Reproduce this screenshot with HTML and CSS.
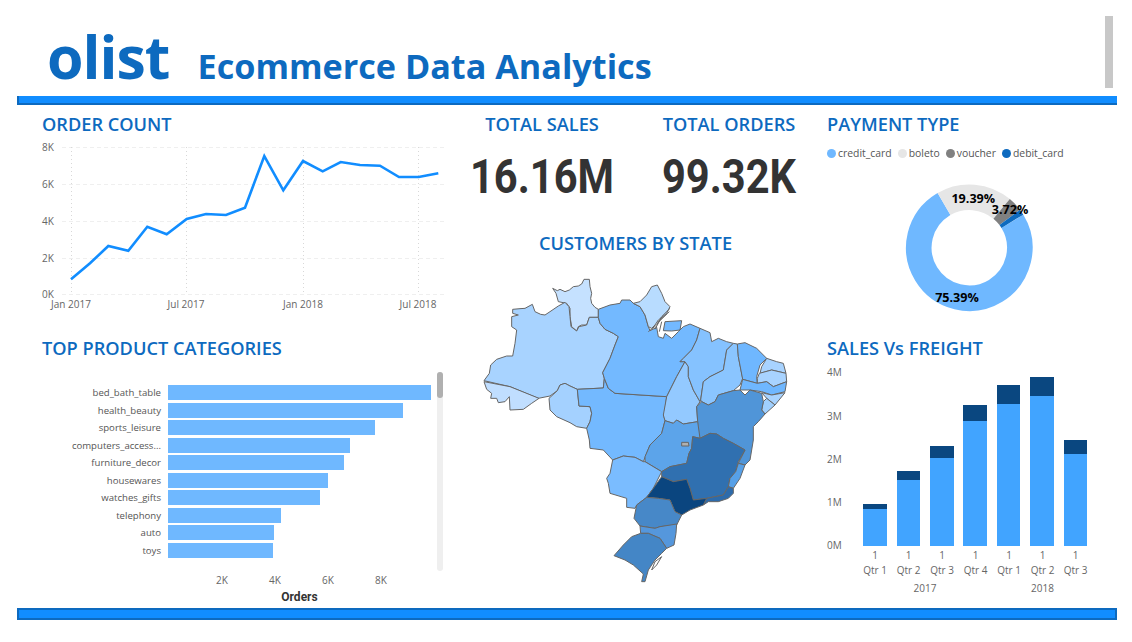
FILE: index.html
```html
<!DOCTYPE html>
<html lang="en">
<head>
<meta charset="utf-8">
<title>olist Ecommerce Data Analytics</title>
<link rel="stylesheet" href="styles.css">
</head>
<body>
<div class="page">
  <header class="header">
    <span class="logo">olist</span>
    <h1 class="title">Ecommerce Data Analytics</h1>
    <div class="page-scroll"></div>
  </header>
  <div class="rule rule-top"></div>
  <main class="dash">
    <div class="col col-left">
      <section class="panel">
        <h2>ORDER COUNT</h2>
        <svg class="chart chart-line" viewBox="17 136 435 184" width="435" height="184">
          <g class="grid-h">
            <line x1="62" x2="445" y1="147.5" y2="147.5"/><line x1="62" x2="445" y1="184.5" y2="184.5"/><line x1="62" x2="445" y1="221.5" y2="221.5"/><line x1="62" x2="445" y1="258.5" y2="258.5"/><line x1="62" x2="445" y1="294.5" y2="294.5"/>
          </g>
          <g class="grid-v">
            <line x1="71.5" x2="71.5" y1="147" y2="295"/><line x1="186.5" x2="186.5" y1="147" y2="295"/><line x1="303.5" x2="303.5" y1="147" y2="295"/><line x1="418.5" x2="418.5" y1="147" y2="295"/>
          </g>
          <g class="axis">
            <text x="42" y="151">8K</text><text x="42" y="188">6K</text><text x="42" y="225">4K</text><text x="42" y="262">2K</text><text x="42" y="298">0K</text>
          </g>
          <g class="axis mid">
            <text x="71" y="308">Jan 2017</text><text x="186" y="308">Jul 2017</text><text x="303" y="308">Jan 2018</text><text x="418" y="308">Jul 2018</text>
          </g>
          <polyline class="trend" points="71,279.3 90,263.3 108.3,246 128.3,250.7 147.3,226.7 166.7,234.3 186.7,219 206,214 226,215 245,207.7 264.3,156 283.3,190.3 303,161 322.7,171.3 340.7,162 360,165 380,165.7 399,177 418.7,177 438.3,173.3"/>
        </svg>
      </section>
      <section class="panel panel-products">
        <h2>TOP PRODUCT CATEGORIES</h2>
        <div class="bars">
          <div class="bar-row"><span class="bar-label">bed_bath_table</span><span class="bar" style="width:263px"></span></div>
          <div class="bar-row"><span class="bar-label">health_beauty</span><span class="bar" style="width:235px"></span></div>
          <div class="bar-row"><span class="bar-label">sports_leisure</span><span class="bar" style="width:207px"></span></div>
          <div class="bar-row"><span class="bar-label">computers_access...</span><span class="bar" style="width:182px"></span></div>
          <div class="bar-row"><span class="bar-label">furniture_decor</span><span class="bar" style="width:176px"></span></div>
          <div class="bar-row"><span class="bar-label">housewares</span><span class="bar" style="width:160px"></span></div>
          <div class="bar-row"><span class="bar-label">watches_gifts</span><span class="bar" style="width:152px"></span></div>
          <div class="bar-row"><span class="bar-label">telephony</span><span class="bar" style="width:113px"></span></div>
          <div class="bar-row"><span class="bar-label">auto</span><span class="bar" style="width:106px"></span></div>
          <div class="bar-row"><span class="bar-label">toys</span><span class="bar" style="width:105px"></span></div>
          <div class="scroll-track"><div class="scroll-thumb"></div></div>
          <div class="ticks"><span>2K</span><span>4K</span><span>6K</span><span>8K</span></div>
          <div class="axis-title">Orders</div>
        </div>
      </section>
    </div>

    <div class="col col-mid">
      <div class="kpis">
        <section class="kpi"><h2>TOTAL SALES</h2><div class="kpi-value">16.16M</div></section>
        <section class="kpi"><h2>TOTAL ORDERS</h2><div class="kpi-value">99.32K</div></section>
      </div>
      <section class="map-panel">
        <h2>CUSTOMERS BY STATE</h2>
        <svg class="map" viewBox="0 0 1020 960" width="340" height="320">
          <g class="states">
            <path fill="#c5e1ff" d="M248,55 262,62 270,58 285,65 298,60 310,50 325,48 335,42 342,28 358,28 360,50 365,70 362,85 365,100 375,112 385,118 385,142 358,142 350,165 335,165 325,170 320,183 305,170 300,140 300,115 290,100 265,95 258,70Z"/>
            <path fill="#a8d3ff" d="M128,118 150,116 165,115 187,103 195,125 212,133 225,135 240,125 265,108 285,97 297,110 300,140 303,170 320,183 327,170 350,165 358,142 385,142 390,160 405,178 430,190 445,200 435,225 420,265 398,308 403,325 400,354 322,358 300,348 285,340 270,345 262,362 240,378 205,385 120,350 42,332 58,310 62,285 80,268 110,258 128,258 135,220 140,180 125,170 125,140 145,135 128,130Z"/>
            <path fill="#c0deff" d="M42,335 120,350 207,385 185,400 160,418 120,420 118,380 105,395 85,398 80,385 62,385 65,370 50,358Z"/>
            <path fill="#a4d1ff" d="M262,362 270,345 285,340 300,348 322,358 327,408 360,410 365,430 360,455 350,475 320,470 300,458 260,440 240,420 237,385Z"/>
            <path fill="#73b9ff" d="M322,358 400,354 403,325 415,355 435,370 590,380 582,440 585,452 575,490 540,525 520,575 495,562 460,558 428,570 400,540 360,535 358,510 350,475 360,455 365,430 360,410 327,408Z"/>
            <path fill="#73b9ff" d="M385,118 420,105 450,100 455,90 480,90 490,100 510,110 525,135 535,170 540,182 560,172 565,200 580,205 585,190 605,205 625,185 640,170 660,162 690,175 680,210 665,240 640,265 630,275 645,275 620,320 590,380 435,370 415,355 403,325 398,308 420,265 435,225 445,200 430,190 405,178 390,160 385,142Z"/>
            <path fill="#73b9ff" d="M585,155 635,152 630,180 605,183 580,182Z"/>
            <path fill="#b8dcff" d="M490,100 510,95 530,75 545,50 562,45 575,70 585,95 600,110 590,130 565,150 555,165 545,175 535,170 525,135 510,110Z"/>
            <path fill="none" d="M600,115 575,140 560,165 535,185M598,125 570,150 555,178M575,155 568,185M590,132 562,160"/>
            <path fill="#93c9ff" d="M645,275 655,290 655,320 670,360 690,395 680,410 683,455 640,462 620,450 610,460 585,452 580,435 590,380 620,320Z"/>
            <path fill="#85c2ff" d="M690,175 720,188 725,215 745,205 770,215 790,220 770,240 765,270 760,300 720,320 700,335 692,390 690,395 670,360 655,320 655,290 645,275 630,275 640,265 665,240 680,210Z"/>
            <path fill="#8ac5ff" d="M790,220 802,222 805,260 818,325 810,345 790,362 745,375 735,395 715,405 695,395 692,390 700,335 720,320 760,300 765,270 770,240Z"/>
            <path fill="#6fb7ff" d="M802,222 825,218 860,235 890,265 870,285 860,320 862,340 818,328 805,260Z"/>
            <path fill="#a8d3ff" d="M890,265 920,275 940,280 948,310 905,300 870,310 875,290Z"/>
            <path fill="#a8d3ff" d="M862,325 868,310 905,300 948,310 950,335 910,350 890,335 862,340Z"/>
            <path fill="#6fb7ff" d="M818,328 862,340 890,335 910,350 950,335 945,365 905,375 875,365 840,360 810,360Z"/>
            <path fill="#a8d3ff" d="M875,368 905,375 945,368 915,405 890,385Z"/>
            <path fill="#a0d0ff" d="M880,395 890,385 915,405 885,432 875,420Z"/>
            <path fill="#5095d8" d="M680,410 695,395 715,405 735,395 745,375 790,362 810,360 825,375 840,360 875,370 880,395 875,420 885,432 865,455 850,470 850,510 840,570 825,585 805,580 825,540 790,520 760,505 740,492 720,490 690,505 683,480 683,455Z"/>
            <path fill="#5ca4ea" d="M585,452 610,460 620,450 640,462 683,455 690,505 668,500 665,535 657,550 650,580 600,590 575,605 525,575 525,560 540,525 575,490Z"/>
            <path fill="#b0b0b0" d="M635,517 655,517 657,528 635,528Z"/>
            <path fill="#7abcff" d="M428,570 460,558 495,562 520,575 525,575 575,605 550,655 530,682 500,705 495,715 470,712 470,685 420,670 415,640 410,625 420,610Z"/>
            <path fill="#3070b0" d="M575,605 600,590 650,580 657,550 665,535 668,500 690,505 720,490 740,492 760,505 790,520 825,540 805,575 797,605 780,625 775,650 760,675 710,685 670,690 660,655 650,628 610,635 575,620Z"/>
            <path fill="#56a0e8" d="M805,580 825,585 810,625 790,655 775,650 780,625 797,605Z"/>
            <path fill="#2d6bab" d="M775,650 790,655 790,670 775,685 745,695 715,695 700,705 710,685 760,675Z"/>
            <path fill="#0a457f" d="M575,620 610,635 650,628 660,655 670,690 710,685 700,705 660,720 635,735 615,725 600,690 565,685 530,682 550,655Z"/>
            <path fill="#4788c8" d="M530,682 565,685 600,690 615,725 635,735 620,765 570,770 555,775 510,768 492,745 500,705Z"/>
            <path fill="#5597dc" d="M510,768 555,775 570,770 620,762 618,790 612,825 590,835 570,805 535,790 512,790Z"/>
            <path fill="#4486c6" d="M512,790 535,790 570,805 590,835 575,850 555,870 535,900 525,935 515,935 520,912 490,885 465,870 432,857 460,825 485,800Z"/>
            <path fill="#ffffff" d="M575,860 560,885 545,900 555,875Z"/>
          </g>
        </svg>
      </section>
    </div>

    <div class="col col-right">
      <section class="panel">
        <h2>PAYMENT TYPE</h2>
        <ul class="legend">
          <li><i class="dot dot-credit"></i>credit_card</li>
          <li><i class="dot dot-boleto"></i>boleto</li>
          <li><i class="dot dot-voucher"></i>voucher</li>
          <li><i class="dot dot-debit"></i>debit_card</li>
        </ul>
        <svg class="chart chart-donut" viewBox="819 161 298 159" width="298" height="159">
          <g class="ring" transform="translate(969.3 247.7)">
            <circle class="seg-credit" r="50.5" pathLength="100" stroke-dasharray="75.39 100" transform="rotate(-31.4)"/>
            <circle class="seg-boleto" r="50.5" pathLength="100" stroke-dasharray="19.39 100" transform="rotate(240)"/>
            <circle class="seg-voucher" r="50.5" pathLength="100" stroke-dasharray="3.72 100" transform="rotate(-50.2)"/>
            <circle class="seg-debit" r="50.5" pathLength="100" stroke-dasharray="1.5 100" transform="rotate(-36.8)"/>
          </g>
          <g class="donut-label">
            <text x="973.3" y="203">19.39%</text>
            <text x="1010" y="214">3.72%</text>
            <text x="957" y="302">75.39%</text>
          </g>
        </svg>
      </section>
      <section class="panel panel-sales">
        <h2>SALES Vs FREIGHT</h2>
        <svg class="chart chart-sales" viewBox="819 360 298 245" width="298" height="245">
          <g class="axis">
            <text x="827" y="376">4M</text><text x="827" y="420">3M</text><text x="827" y="463">2M</text><text x="827" y="506">1M</text><text x="827" y="549">0M</text>
          </g>
          <g class="sales-light">
            <rect x="863" y="509" width="24" height="37"/><rect x="897" y="480" width="23" height="66"/><rect x="930" y="458" width="24" height="88"/><rect x="963" y="421" width="24" height="125"/><rect x="997" y="404" width="23" height="142"/><rect x="1030" y="396" width="24" height="150"/><rect x="1064" y="454" width="23" height="92"/>
          </g>
          <g class="sales-dark">
            <rect x="863" y="504" width="24" height="5"/><rect x="897" y="471" width="23" height="9"/><rect x="930" y="446" width="24" height="12"/><rect x="963" y="405" width="24" height="16"/><rect x="997" y="385" width="23" height="19"/><rect x="1030" y="377" width="24" height="19"/><rect x="1064" y="440" width="23" height="14"/>
          </g>
          <g class="axis mid">
            <text x="875" y="559">1</text><text x="908.5" y="559">1</text><text x="942" y="559">1</text><text x="975.5" y="559">1</text><text x="1009" y="559">1</text><text x="1042.5" y="559">1</text><text x="1075.5" y="559">1</text>
            <text x="875" y="574">Qtr 1</text><text x="908.5" y="574">Qtr 2</text><text x="942" y="574">Qtr 3</text><text x="975.5" y="574">Qtr 4</text><text x="1009" y="574">Qtr 1</text><text x="1042.5" y="574">Qtr 2</text><text x="1075.5" y="574">Qtr 3</text>
            <text x="925" y="592">2017</text><text x="1042.5" y="592">2018</text>
          </g>
        </svg>
      </section>
    </div>
  </main>
  <div class="rule rule-bottom"></div>
</div>
</body>
</html>
```
FILE: styles.css
```css
* { box-sizing: border-box; }
html, body { margin: 0; height: 100%; background: #fff; overflow: hidden; }
body { font-family: "Open Sans", "Noto Sans", sans-serif; color: #555; }
.page { width: 1132px; height: 642px; padding: 0 15px 0 17px; }

.header { position: relative; height: 96px; display: flex; align-items: baseline; padding: 20px 0 0 30px; color: #0d6abf; }
.logo { font-size: 59px; font-weight: 700; line-height: 72px; letter-spacing: -1px; }
.title { margin: 0 0 0 28px; font-size: 34.2px; font-weight: 700; line-height: 44px; }
.page-scroll { position: absolute; left: 1088px; top: 16px; width: 8px; height: 72px; background: #c8c8c8; }

.rule { background: #118dff; border: solid #0d6abf; }
.rule-top { height: 9px; border-width: 0 0 2px 2px; }
.rule-bottom { height: 12px; border-width: 2px; }

.dash { display: grid; grid-template-columns: 435px 367px 298px; height: 503px; }
.col { min-width: 0; }
h2 { margin: 0; font-size: 18.2px; line-height: 24px; font-weight: 600; color: #0d6abf; white-space: nowrap; }

.col-left .panel h2 { padding-left: 25px; }
.col-left .panel:first-child, .col-right .panel:first-child, .kpis { padding-top: 7px; }
.chart { display: block; }
.panel-products, .panel-sales { margin-top: 16px; }

.grid-h line { stroke: #efefef; stroke-dasharray: 4 3; }
.grid-v line { stroke: #d8d8d8; stroke-dasharray: 1 3; }
.axis text { font-size: 10px; fill: #666; }
.axis.mid text { text-anchor: middle; }
.trend { fill: none; stroke: #118dff; stroke-width: 2.6; stroke-linejoin: miter; }

.bars { position: relative; padding-top: 25px; display: grid; row-gap: 2.5px; }
.bar-row { height: 15px; display: grid; grid-template-columns: 144px auto; column-gap: 7px; justify-content: start; align-items: stretch; }
.bar-label { font-size: 9.6px; line-height: 15px; text-align: right; color: #555; white-space: nowrap; }
.bar { display: block; background: #6fb8ff; }
.scroll-track { position: absolute; left: 420px; top: 12px; width: 6px; height: 199px; border-radius: 3px; background: #efefef; }
.scroll-thumb { width: 6px; height: 26px; border-radius: 3px; background: #b0b0b0; }
.ticks { display: grid; grid-template-columns: repeat(4, 53px); margin: 13px 0 0 178.5px; font-size: 10px; line-height: 14px; text-align: center; color: #666; }
.axis-title { margin-top: -1px; width: 565px; text-align: center; font-family: Roboto, "Liberation Sans", sans-serif; font-weight: 700; font-size: 12px; line-height: 16px; color: #333; }

.kpis { display: grid; grid-template-columns: 180px 180px; column-gap: 7px; text-align: center; }
.kpi-value { margin-top: 13px; font-family: Roboto, "Liberation Sans", sans-serif; font-weight: 700; font-size: 49px; line-height: 56px; color: #333; transform: scaleX(.85); }
.map-panel { margin-top: 26px; text-align: center; }
.map { display: block; margin: 15px 0 0 18px; }
.states path { stroke: #666; stroke-width: 3; stroke-linejoin: round; }

.col-right { padding-left: 8px; }
.col-right .chart { margin-left: -8px; }
.legend { list-style: none; margin: 9px 0 0; padding: 0; height: 16px; display: flex; gap: 6px; font-size: 10.4px; line-height: 16px; color: #555; }
.legend li { display: flex; align-items: center; gap: 2px; }
.dot { width: 9px; height: 9px; border-radius: 50%; }
.dot-credit { background: #6fb8ff; }
.dot-boleto { background: #e6e6e6; }
.dot-voucher { background: #808080; }
.dot-debit { background: #0d6abf; }

.ring circle { fill: none; stroke-width: 25.6; }
.seg-credit { stroke: #6fb8ff; }
.seg-boleto { stroke: #e6e6e6; }
.seg-voucher { stroke: #808080; }
.seg-debit { stroke: #0d6abf; }
.donut-label text { font-size: 12.6px; font-weight: 700; fill: #000; text-anchor: middle; }
.sales-light { fill: #41a4ff; }
.sales-dark { fill: #0a4780; }
```
